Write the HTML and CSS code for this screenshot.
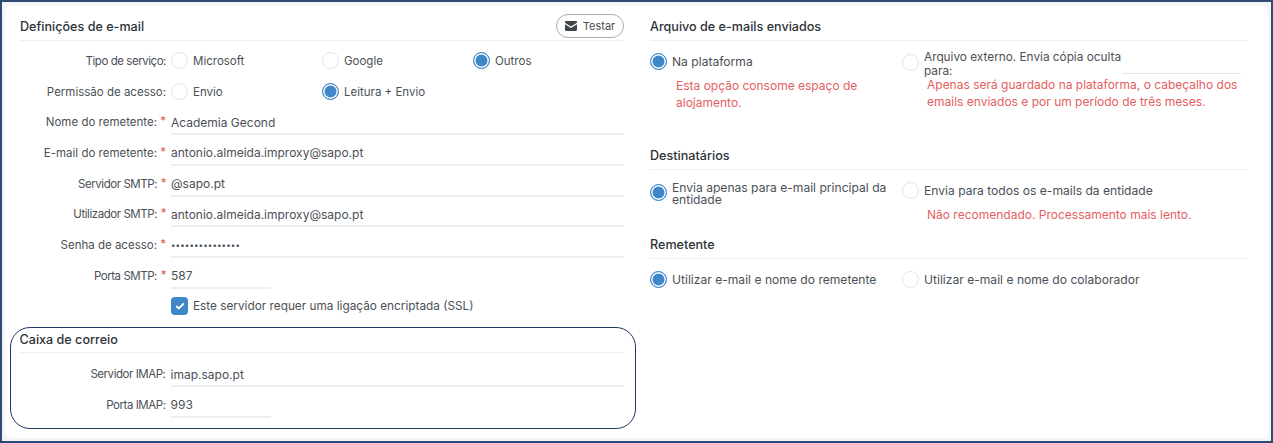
FILE: index.html
```html
<!DOCTYPE html>
<html lang="pt">
<head>
<meta charset="utf-8">
<title>Definições de e-mail</title>
<link rel="stylesheet" href="styles.css">
</head>
<body>
<div class="frame">
  <main class="card">
    <div class="col col-left">
      <header class="head head-main">
        <h2>Definições de e-mail</h2>
        <button class="btn" type="button">
          <svg width="12" height="10" viewBox="0 0 12 10"><path d="M1.2 0h9.6C11.5 0 12 .5 12 1.2v.6L6 5.6 0 1.8v-.6C0 .5.5 0 1.2 0zM0 3.3l6 3.8 6-3.8v5.5c0 .7-.5 1.2-1.2 1.2H1.2C.5 10 0 9.500 0 8.800z" fill="#3f444a"/></svg>
          Testar
        </button>
      </header>
      <div class="form">
        <div class="row">
          <span class="lbl lbl-tight">Tipo de serviço:</span>
          <div class="opts">
            <label class="opt"><i class="radio"></i>Microsoft</label>
            <label class="opt"><i class="radio"></i>Google</label>
            <label class="opt"><i class="radio on"></i>Outros</label>
          </div>
        </div>
        <div class="row">
          <span class="lbl">Permissão de acesso:</span>
          <div class="opts">
            <label class="opt"><i class="radio"></i>Envio</label>
            <label class="opt"><i class="radio on"></i>Leitura + Envio</label>
          </div>
        </div>
        <div class="row"><span class="lbl req">Nome do remetente:</span><div class="val">Academia Gecond</div></div>
        <div class="row"><span class="lbl req">E-mail do remetente:</span><div class="val">antonio.almeida.improxy@sapo.pt</div></div>
        <div class="row"><span class="lbl req lbl-tight">Servidor SMTP:</span><div class="val">@sapo.pt</div></div>
        <div class="row"><span class="lbl req lbl-tight">Utilizador SMTP:</span><div class="val">antonio.almeida.improxy@sapo.pt</div></div>
        <div class="row"><span class="lbl req">Senha de acesso:</span><div class="val dots">•••••••••••••••</div></div>
        <div class="row"><span class="lbl req lbl-tight">Porta SMTP:</span><div class="val short">587</div></div>
        <div class="row">
          <span class="lbl"></span>
          <label class="opt opt-ssl">
            <i class="check"><svg width="10" height="8" viewBox="0 0 10 8"><path d="M1.300 4l2.500 2.500L8.700 1.500" fill="none" stroke="#fff" stroke-width="1.800"/></svg></i>
            Este servidor requer uma ligação encriptada (SSL)
          </label>
        </div>
      </div>
      <section class="mailbox">
        <header class="head head-box"><h2>Caixa de correio</h2></header>
        <div class="row"><span class="lbl lbl-tight">Servidor IMAP:</span><div class="val">imap.sapo.pt</div></div>
        <div class="row"><span class="lbl lbl-tight">Porta IMAP:</span><div class="val short">993</div></div>
      </section>
    </div>

    <div class="col col-right">
      <header class="head"><h2>Arquivo de e-mails enviados</h2></header>
      <div class="pair pair-archive">
        <div>
          <label class="opt"><i class="radio on"></i>Na plataforma</label>
          <p class="warn">Esta opção consome espaço de alojamento.</p>
        </div>
        <div>
          <div class="external">
            <label class="opt opt-wrap"><i class="radio"></i><span>Arquivo externo. Envia cópia oculta para:</span></label>
            <span class="ext-input"></span>
          </div>
          <p class="warn warn-tight">Apenas será guardado na plataforma, o cabeçalho dos emails enviados e por um período de três meses.</p>
        </div>
      </div>

      <header class="head"><h2>Destinatários</h2></header>
      <div class="pair pair-dest">
        <div><label class="opt opt-wrap opt-dest"><i class="radio on"></i><span>Envia apenas para e-mail principal da entidade</span></label></div>
        <div>
          <label class="opt"><i class="radio"></i>Envia para todos os e-mails da entidade</label>
          <p class="warn">Não recomendado. Processamento mais lento.</p>
        </div>
      </div>

      <header class="head"><h2>Remetente</h2></header>
      <div class="pair pair-rem">
        <div><label class="opt"><i class="radio on"></i>Utilizar e-mail e nome do remetente</label></div>
        <div><label class="opt"><i class="radio"></i>Utilizar e-mail e nome do colaborador</label></div>
      </div>
    </div>
  </main>
</div>
</body>
</html>
```

FILE: styles.css
```css
* { box-sizing: border-box; }
html, body { margin: 0; padding: 0; }
body {
  width: 1273px;
  height: 443px;
  overflow: hidden;
  font-family: "Inter", "Liberation Sans", sans-serif;
  font-size: 11.500px;
  color: #4b5056;
}
.frame {
  height: 443px;
  border: 2px solid #2f4a75;
  background: #f4f5f8;
  padding: 4px 3px 3px 3px;
}
.card {
  height: 100%;
  background: #fff;
  border-radius: 6px;
  display: grid;
  grid-template-columns: 619px 598px;
  column-gap: 11px;
  padding: 6px 0 0 15px;
}
.col { min-width: 0; }
.head {
  height: 29px;
  border-bottom: 1px solid #eceef0;
  display: flex;
  align-items: center;
  justify-content: space-between;
}
.head-main { width: 604px; }
h2 {
  margin: 0;
  font-size: 12.600px;
  font-weight: 500;
  color: #2e3338;
}
.btn {
  width: 68px;
  height: 24px;
  border: 1px solid #a9adb1;
  border-radius: 12px;
  background: #fff;
  display: flex;
  align-items: center;
  justify-content: center;
  gap: 6px;
  font: inherit;
  font-size: 11px;
  color: #4b5056;
  padding: 0;
  margin-top: -1px;
}
.form { width: 604px; padding-top: 4.500px; }
.row {
  display: flex;
  height: 30.700px;
  align-items: center;
}
.lbl {
  width: 151px;
  flex: none;
  text-align: right;
  padding-right: 5px;
  white-space: nowrap;
}
.lbl-tight { letter-spacing: -0.450px; }
.lbl.req { position: relative; padding-right: 14px; }
.lbl.req::after {
  content: "*";
  position: absolute;
  right: 5px;
  top: -1px;
  color: #e05a5a;
}
.opts { display: flex; }
.opts .opt { width: 151px; }
.opt { display: flex; align-items: center; gap: 5px; white-space: nowrap; }
.opt-ssl { font-size: 11.800px; }
.opt-wrap { white-space: normal; line-height: 14px; }
.radio {
  width: 17px;
  height: 17px;
  flex: none;
  border: 1px solid #e2e3e5;
  border-radius: 50%;
  background: #fff;
}
.radio.on {
  background: #3e87c9;
  border: 1px solid #3e87c9;
  box-shadow: inset 0 0 0 1.500px #fff;
}
.val {
  flex: 1;
  height: 26px;
  padding-top: 2px;
  display: flex;
  align-items: center;
  border-bottom: 2px solid #eceef0;
  font-size: 12px;
}
.val.short { flex: none; width: 100px; }
.val.dots { letter-spacing: 0.100px; font-size: 8px; }
.check {
  width: 17px;
  height: 18px;
  flex: none;
  border-radius: 4px;
  background: #3e87c9;
  display: flex;
  align-items: center;
  justify-content: center;
}
.mailbox {
  width: 626px;
  height: 102px;
  margin: 5px 0 0 -10px;
  padding: 0 11.500px 0 8.500px;
  border: 1.500px solid #1d3a66;
  border-radius: 20px;
}
.head-box { height: 25px; margin-bottom: 6px; }
.pair {
  display: grid;
  grid-template-columns: 252px 1fr;
  padding-top: 11.500px;
  font-size: 12.100px;
}
.pair-archive { height: 100px; }
.pair-dest { height: 60px; }
.warn {
  margin: 7px 0 0 26px;
  color: #e4605f;
  line-height: 17px;
  font-size: 12px;
}
.pair > div:last-child .warn { margin-left: 25px; }
.pair > div:last-child .warn-tight { margin-top: 0; }
.external { display: flex; height: 26px; margin-top: -2.500px; }
.external .opt { width: 220px; flex: none; height: 28px; font-size: 11.800px; }
.external .radio { margin-top: -4px; }
.ext-input { width: 119px; height: 24px; border-bottom: 1px solid #e4e6e8; }
.opt-dest { line-height: 12.500px; }
.opt-dest .radio { margin-top: -3.500px; }
```
